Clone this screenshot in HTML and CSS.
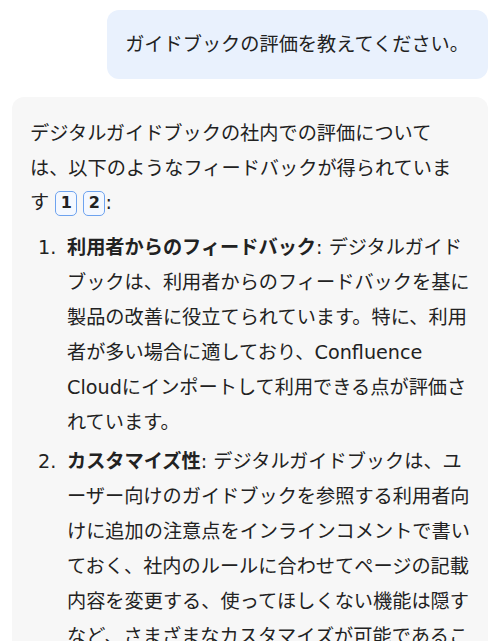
FILE: index.html
```html
<!DOCTYPE html>
<html lang="ja">
  <head>
    <meta charset="UTF-8" />
    <meta name="viewport" content="width=device-width, initial-scale=1.0" />
    <title>チャット</title>
    <link rel="stylesheet" href="styles.css">
  </head>
  <body>
    <div class="chat">
      <div class="msg user">ガイドブックの評価を教えてください。</div>
      <div class="msg bot">
        <p>デジタルガイドブックの社内での評価については、以下のようなフィードバックが得られています <span class="cite">1</span> <span class="cite">2</span>:</p>
        <ol class="points">
          <li>
            <span class="num">1.</span>
            <div class="body"><strong>利用者からのフィードバック</strong>: デジタルガイドブックは、利用者からのフィードバックを基に製品の改善に役立てられています。特に、利用者が多い場合に適しており、Confluence Cloudにインポートして利用できる点が評価されています。</div>
          </li>
          <li>
            <span class="num">2.</span>
            <div class="body"><strong>カスタマイズ性</strong>: デジタルガイドブックは、ユーザー向けのガイドブックを参照する利用者向けに追加の注意点をインラインコメントで書いておく、社内のルールに合わせてページの記載内容を変更する、使ってほしくない機能は隠すなど、さまざまなカスタマイズが可能であることが評価されています。</div>
          </li>
        </ol>
      </div>
    </div>
  </body>
</html>
```

FILE: styles.css
```css
body {
  margin: 0;
  padding: 10px 12px;
  font-family: 'DejaVu Sans', 'Noto Sans CJK JP', sans-serif;
  font-size: 19.2px;
  color: #222;
  background-color: #fff;
}
.chat {
  display: flex;
  flex-direction: column;
  gap: 18px;
}
.msg {
  border-radius: 12px;
}
.user {
  align-self: flex-end;
  background-color: #e9f1fd;
  padding: 18px 19px 18px 18px;
  line-height: 33px;
}
.bot {
  background-color: #f7f7f7;
  padding: 20px 17px 18px 18px;
  line-height: 35px;
}
.bot p {
  margin: 0 12px 9px 0;
  line-height: 34.5px;
}
.cite {
  display: inline-flex;
  align-items: center;
  justify-content: center;
  width: 22px;
  height: 25px;
  box-sizing: border-box;
  border: 1.5px solid #6ea3ef;
  border-radius: 5px;
  background-color: #f4f8ff;
  font-size: 16px;
  font-weight: bold;
  line-height: 1;
  vertical-align: 1px;
}
.points {
  list-style: none;
  margin: 0;
  padding: 0;
}
.points li {
  display: flex;
  margin-bottom: 4px;
}
.num {
  flex: none;
  width: 29px;
  padding-left: 8px;
}
.body {
  flex: 1;
}
strong {
  font-weight: bold;
}
```
